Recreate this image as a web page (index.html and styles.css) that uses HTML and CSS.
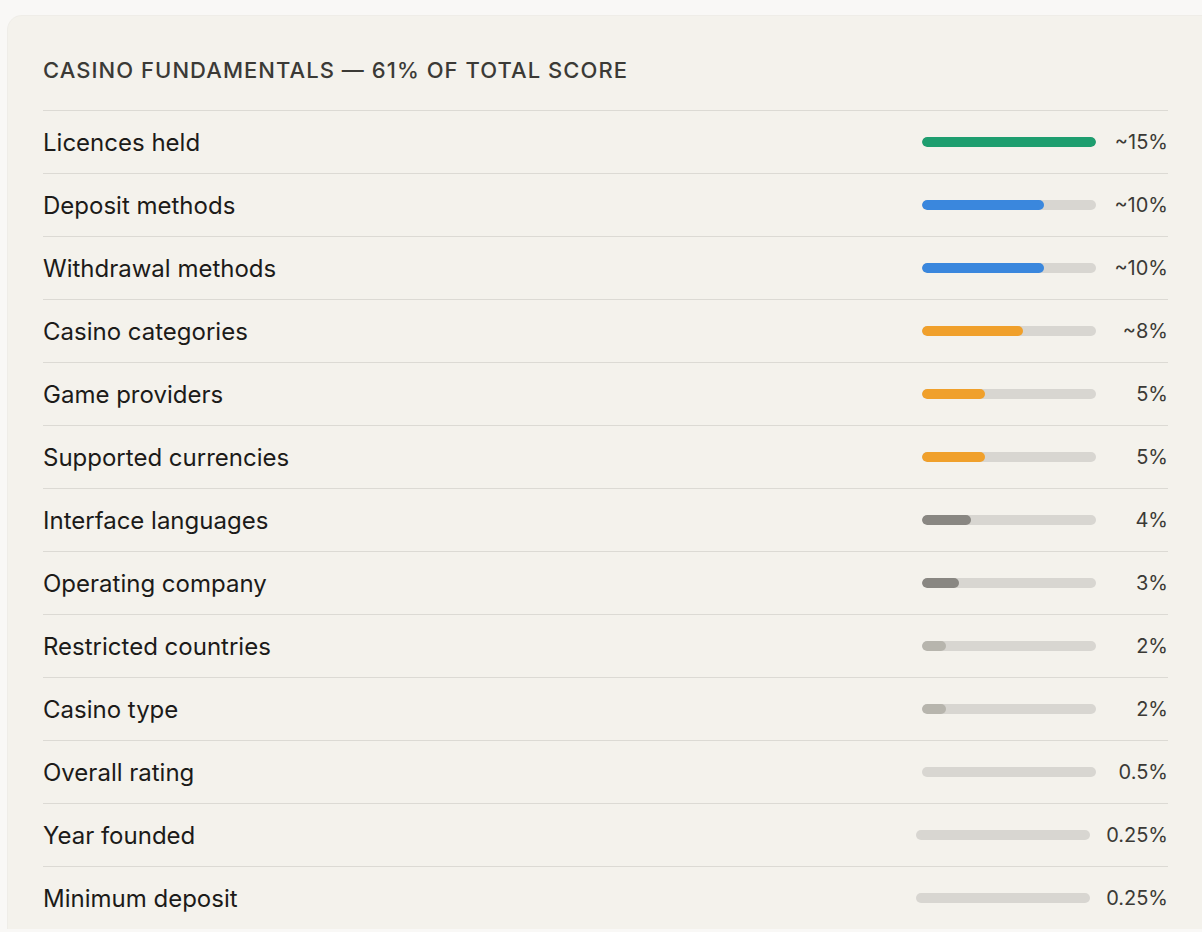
FILE: index.html
```html
<!DOCTYPE html>
<html lang="en">
<head>
<meta charset="utf-8">
<title>Casino fundamentals</title>
<link rel="stylesheet" href="styles.css">
</head>
<body>
<section class="card">
  <h2 class="title">Casino fundamentals — 61% of total score</h2>
  <ul class="rows">
    <li class="row"><span class="label">Licences held</span><span class="track"><span class="fill green" style="width:100%"></span></span><span class="pct">~15%</span></li>
    <li class="row"><span class="label">Deposit methods</span><span class="track"><span class="fill blue" style="width:70%"></span></span><span class="pct">~10%</span></li>
    <li class="row"><span class="label">Withdrawal methods</span><span class="track"><span class="fill blue" style="width:70%"></span></span><span class="pct">~10%</span></li>
    <li class="row"><span class="label">Casino categories</span><span class="track"><span class="fill orange" style="width:58%"></span></span><span class="pct">~8%</span></li>
    <li class="row"><span class="label">Game providers</span><span class="track"><span class="fill orange" style="width:36%"></span></span><span class="pct">5%</span></li>
    <li class="row"><span class="label">Supported currencies</span><span class="track"><span class="fill orange" style="width:36%"></span></span><span class="pct">5%</span></li>
    <li class="row"><span class="label">Interface languages</span><span class="track"><span class="fill dark" style="width:28%"></span></span><span class="pct">4%</span></li>
    <li class="row"><span class="label">Operating company</span><span class="track"><span class="fill dark" style="width:21%"></span></span><span class="pct">3%</span></li>
    <li class="row"><span class="label">Restricted countries</span><span class="track"><span class="fill light" style="width:14%"></span></span><span class="pct">2%</span></li>
    <li class="row"><span class="label">Casino type</span><span class="track"><span class="fill light" style="width:14%"></span></span><span class="pct">2%</span></li>
    <li class="row"><span class="label">Overall rating</span><span class="track"><span class="fill light" style="width:0%"></span></span><span class="pct">0.5%</span></li>
    <li class="row"><span class="label">Year founded</span><span class="track"><span class="fill light" style="width:0%"></span></span><span class="pct">0.25%</span></li>
    <li class="row"><span class="label">Minimum deposit</span><span class="track"><span class="fill light" style="width:0%"></span></span><span class="pct">0.25%</span></li>
  </ul>
</section>
</body>
</html>
```
FILE: styles.css
```css
html, body {
  margin: 0;
  padding: 0;
  background: #f9f8f6;
}
body {
  padding: 16px 0 0 8px;
  font-family: Inter, "Liberation Sans", sans-serif;
  color: #1c1b19;
}
.card {
  width: 1160px;
  background: #f4f2ec;
  border-radius: 14px 0 0 0;
  padding: 40px 0 0 35px;
  box-shadow: 0 0 0 1px #efede8;
}
.title {
  margin: 0 0 26px 0;
  font-size: 22px;
  line-height: 28px;
  font-weight: 500;
  text-transform: uppercase;
  letter-spacing: 1.05px;
  color: #3b3a36;
}
.rows {
  list-style: none;
  margin: 0;
  padding: 0;
  width: 1125px;
}
.row {
  display: flex;
  align-items: center;
  height: 62px;
  border-top: 1px solid #dcdad4;
}
.label {
  flex: 1;
  font-size: 24px;
  letter-spacing: 0;
  color: #1c1b19;
}
.track {
  display: block;
  width: 174px;
  height: 10px;
  border-radius: 5px;
  background: #d8d6d1;
  overflow: hidden;
  margin-right: 16px;
}
.fill {
  display: block;
  height: 100%;
  border-radius: 5px;
}
.green { background: #1e9e6f; }
.blue { background: #3a87dd; }
.orange { background: #f0a02b; }
.dark { background: #898782; }
.light { background: #b7b5ad; }
.pct {
  min-width: 56px;
  text-align: right;
  font-size: 20px;
  color: #3b3a36;
}
```
